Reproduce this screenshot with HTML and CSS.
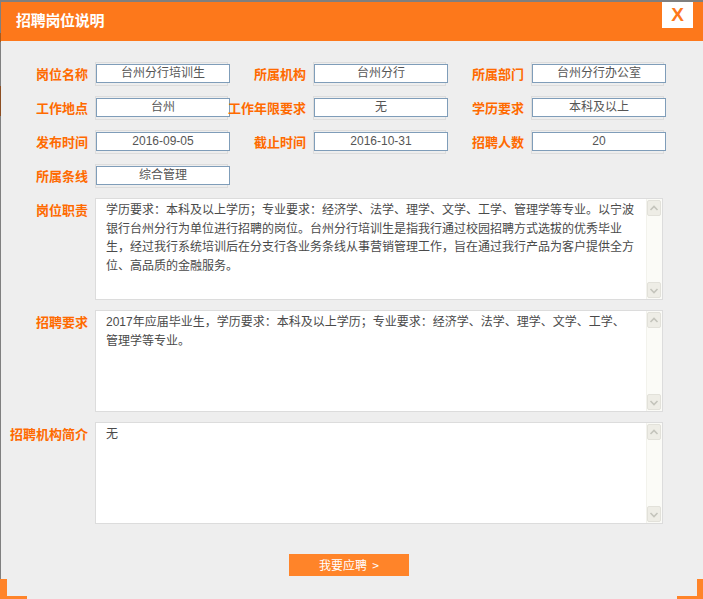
FILE: index.html
```html
<!DOCTYPE html>
<html lang="zh-CN">
<head>
<meta charset="utf-8">
<title>招聘岗位说明</title>
<link rel="stylesheet" href="styles.css">
</head>
<body>
<div class="dialog">
  <div class="header">
    <h1 class="title">招聘岗位说明</h1>
    <div class="close">X</div>
  </div>

  <div class="fields">
    <div class="label">岗位名称</div>
    <div class="val"><div class="inp">台州分行培训生</div></div>
    <div class="label">所属机构</div>
    <div class="val"><div class="inp">台州分行</div></div>
    <div class="label">所属部门</div>
    <div class="val"><div class="inp">台州分行办公室</div></div>

    <div class="label">工作地点</div>
    <div class="val"><div class="inp">台州</div></div>
    <div class="label">工作年限要求</div>
    <div class="val"><div class="inp">无</div></div>
    <div class="label">学历要求</div>
    <div class="val"><div class="inp">本科及以上</div></div>

    <div class="label">发布时间</div>
    <div class="val"><div class="inp">2016-09-05</div></div>
    <div class="label">截止时间</div>
    <div class="val"><div class="inp">2016-10-31</div></div>
    <div class="label">招聘人数</div>
    <div class="val"><div class="inp">20</div></div>

    <div class="label">所属条线</div>
    <div class="val"><div class="inp">综合管理</div></div>
  </div>

  <div class="areas">
    <div class="trow">
      <div class="tlabel">岗位职责</div>
      <div class="ta">
        <div class="ta-text">学历要求：本科及以上学历；专业要求：经济学、法学、理学、文学、工学、管理学等专业。以宁波<br>银行台州分行为单位进行招聘的岗位。台州分行培训生是指我行通过校园招聘方式选拔的优秀毕业<br>生，经过我行系统培训后在分支行各业务条线从事营销管理工作，旨在通过我行产品为客户提供全方<br>位、高品质的金融服务。</div>
        <div class="sb">
          <div class="sb-btn"><svg width="12" height="13" viewBox="0 0 12 13"><polyline points="2.5,8 6,4.5 9.5,8" fill="none" stroke="#c4c4bc" stroke-width="1.6"/></svg></div>
          <div class="sb-btn"><svg width="12" height="13" viewBox="0 0 12 13"><polyline points="2.5,5 6,8.5 9.5,5" fill="none" stroke="#c4c4bc" stroke-width="1.6"/></svg></div>
        </div>
      </div>
    </div>
    <div class="trow">
      <div class="tlabel">招聘要求</div>
      <div class="ta">
        <div class="ta-text">2017年应届毕业生，学历要求：本科及以上学历；专业要求：经济学、法学、理学、文学、工学、<br>管理学等专业。</div>
        <div class="sb">
          <div class="sb-btn"><svg width="12" height="13" viewBox="0 0 12 13"><polyline points="2.5,8 6,4.5 9.5,8" fill="none" stroke="#c4c4bc" stroke-width="1.6"/></svg></div>
          <div class="sb-btn"><svg width="12" height="13" viewBox="0 0 12 13"><polyline points="2.5,5 6,8.5 9.5,5" fill="none" stroke="#c4c4bc" stroke-width="1.6"/></svg></div>
        </div>
      </div>
    </div>
    <div class="trow">
      <div class="tlabel">招聘机构简介</div>
      <div class="ta">
        <div class="ta-text">无</div>
        <div class="sb">
          <div class="sb-btn"><svg width="12" height="13" viewBox="0 0 12 13"><polyline points="2.5,8 6,4.5 9.5,8" fill="none" stroke="#c4c4bc" stroke-width="1.6"/></svg></div>
          <div class="sb-btn"><svg width="12" height="13" viewBox="0 0 12 13"><polyline points="2.5,5 6,8.5 9.5,5" fill="none" stroke="#c4c4bc" stroke-width="1.6"/></svg></div>
        </div>
      </div>
    </div>
  </div>

  <div class="actions">
    <button class="apply">我要应聘&nbsp;&nbsp;&gt;</button>
  </div>

  <span class="corner corner-bl"></span>
  <span class="corner corner-br"></span>
</div>
</body>
</html>
```

FILE: styles.css
```css
* {
  box-sizing: border-box;
}

html, body {
  margin: 0;
  padding: 0;
  width: 703px;
  height: 599px;
  overflow: hidden;
  background: #eeeeee;
  font-family: "Liberation Sans", "Noto Sans CJK SC", sans-serif;
}

.dialog {
  position: relative;
  width: 703px;
  height: 599px;
  border-top: 2px solid #7f7f7f;
  border-left: 1px solid #7f7f7f;
  border-image: linear-gradient(to bottom, #7f7f7f 0 32px, #a85a1c 32px 41px, #7f7f7f 41px 85px, #8c4e22 85px 115px, #7f7f7f 115px) 1;
  background: #eeeeee;
}

.header {
  height: 39px;
  background: #fd781b;
  display: flex;
  align-items: flex-start;
  justify-content: space-between;
  padding: 0 10px 0 15px;
}

.title {
  margin: 0;
  font-size: 15px;
  font-weight: bold;
  color: #ffffff;
  line-height: 38px;
  letter-spacing: -0.3px;
}

.close {
  width: 31px;
  height: 26px;
  background: #ffffff;
  color: #fd781b;
  font-family: "Liberation Sans", sans-serif;
  font-weight: bold;
  font-size: 19px;
  line-height: 26px;
  text-align: center;
}

.fields {
  margin-top: 21px;
  padding-left: 9px;
  display: grid;
  grid-template-columns: 85px 133px 85px 133px 85px 133px;
  grid-auto-rows: 24px;
  row-gap: 10px;
  align-items: center;
}

.label,
.tlabel {
  text-align: right;
  padding-right: 7px;
  color: #ff6a00;
  font-size: 13px;
  font-weight: bold;
  white-space: nowrap;
  line-height: 18px;
  font-family: "Noto Sans CJK SC", sans-serif;
}

.label {
  padding-bottom: 1px;
}

.val {
  width: 133px;
  height: 24px;
  border: 1px solid #dddddd;
}

.inp {
  width: 134px;
  height: 19px;
  margin-top: 1px;
  border: 1px solid #7f9db9;
  background: #ffffff;
  color: #555555;
  font-size: 12px;
  line-height: 17px;
  text-align: center;
  white-space: nowrap;
}

.areas {
  margin-top: 10px;
  padding-left: 9px;
  display: flex;
  flex-direction: column;
  gap: 10px;
}

.trow {
  display: flex;
  align-items: flex-start;
}

.tlabel {
  width: 85px;
  padding-top: 3px;
}

.ta {
  width: 568px;
  height: 102px;
  border: 1px solid #dcdcdc;
  background: #ffffff;
  display: flex;
}

.ta-text {
  flex: 1;
  padding: 2px 0 0 10px;
  font-size: 12px;
  line-height: 18.5px;
  color: #4a4a4a;
  white-space: nowrap;
  overflow: hidden;
}

.sb {
  width: 16px;
  background: #fbfbf7;
  border-left: 1px solid #f2f2ec;
  display: flex;
  flex-direction: column;
  justify-content: space-between;
  padding: 1px 1px 1px 0;
}

.sb-btn {
  height: 16px;
  background: #eeede6;
  border: 1px solid #e2e1da;
  border-radius: 2px;
  display: flex;
  align-items: center;
  justify-content: center;
}

.sb-btn svg {
  display: block;
}

.actions {
  margin-top: 30px;
  display: flex;
  justify-content: center;
  padding-right: 6px;
}

.apply {
  width: 120px;
  height: 22px;
  border: none;
  padding: 0;
  background: #ff8429;
  color: #ffffff;
  font-family: "Noto Sans CJK SC", sans-serif;
  font-size: 12px;
  line-height: 22px;
  cursor: pointer;
}

.corner {
  position: absolute;
  bottom: 0;
  width: 27px;
  height: 20px;
}

.corner-bl {
  left: -1px;
  border-left: 7px solid #ff8429;
  border-bottom: 3px solid #ff8429;
}

.corner-br {
  right: 0;
  width: 26px;
  border-right: 6px solid #ff8429;
  border-bottom: 3px solid #ff8429;
}
```
